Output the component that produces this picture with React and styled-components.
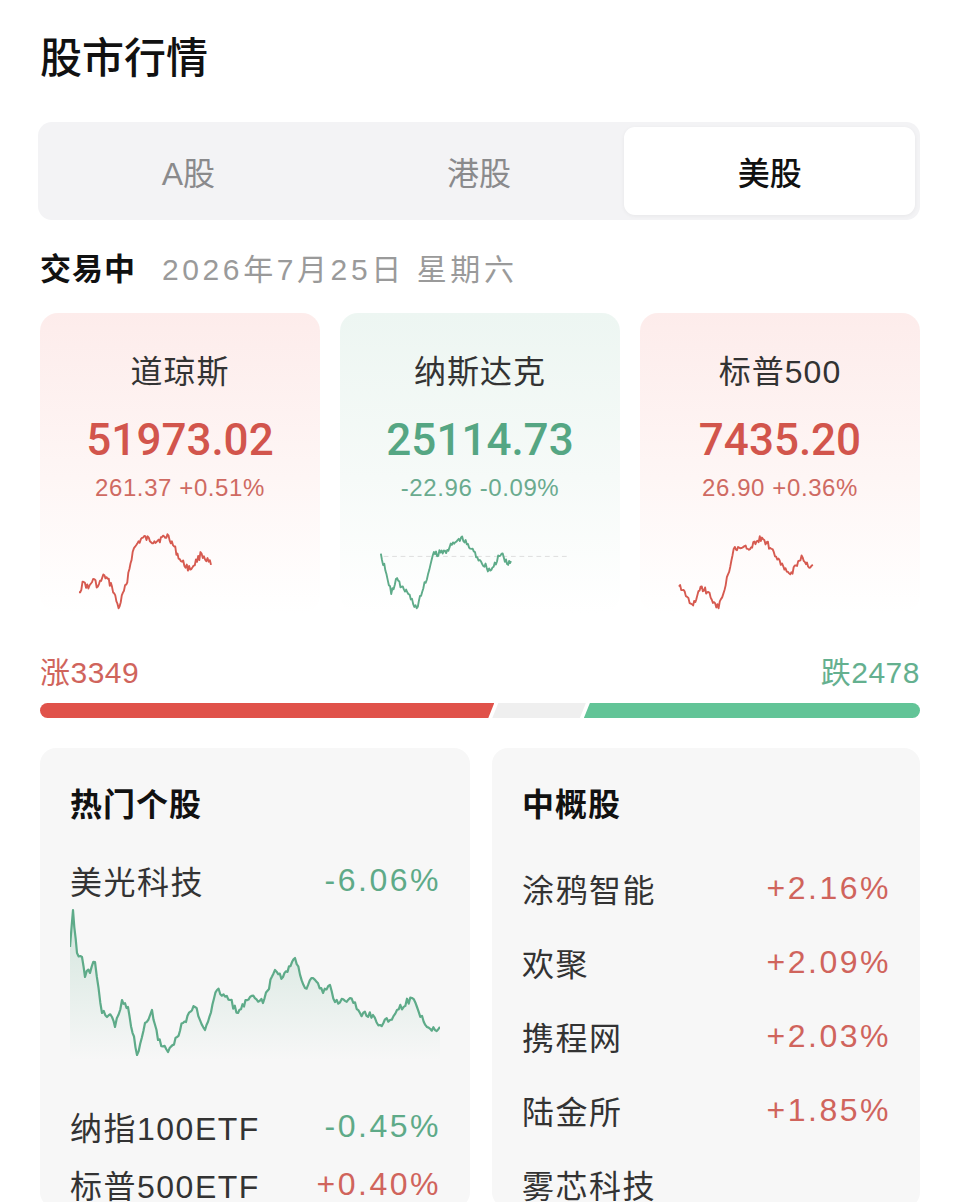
import styled, { createGlobalStyle } from "styled-components"

const RED = "#d2554c"
const GREEN = "#55a683"

const GlobalStyle = createGlobalStyle`
  body {
    margin: 0;
    background: #fff;
    font-family: "Liberation Sans", "Noto Sans CJK SC", sans-serif;
    color: #222;
  }
`

const Page = styled.div`
  width: 880px;
  padding: 31px 40px 0;
  height: 1171px;
  overflow: hidden;
`

const Title = styled.h1`
  margin: 0;
  font-size: 42px;
  line-height: 56px;
  font-weight: 500;
  color: #111;
`

const Segment = styled.div`
  margin-top: 35px;
  margin-left: -2px;
  height: 98px;
  box-sizing: border-box;
  padding: 5px;
  border-radius: 14px;
  background: #f3f3f5;
  display: grid;
  grid-template-columns: repeat(3, 1fr);
`

const Tab = styled.div`
  display: flex;
  align-items: center;
  justify-content: center;
  border-radius: 11px;
  font-size: 32px;
  font-weight: ${p => (p.$active ? 500 : 400)};
  color: ${p => (p.$active ? "#111" : "#8a8a8c")};
  background: ${p => (p.$active ? "#fff" : "transparent")};
  box-shadow: ${p => (p.$active ? "0 1px 4px rgba(0,0,0,0.05)" : "none")};
`

const Status = styled.div`
  margin-top: 30px;
  display: flex;
  align-items: center;
  gap: 26px;
  line-height: 40px;
`

const StatusLabel = styled.span`
  font-size: 31px;
  font-weight: 700;
  color: #111;
  letter-spacing: 1px;
`

const StatusDate = styled.span`
  font-size: 30px;
  color: #9a9a9a;
  letter-spacing: 3.6px;
`

const Cards = styled.div`
  margin-top: 23px;
  display: grid;
  grid-template-columns: repeat(3, 1fr);
  gap: 20px;
`

const Card = styled.div`
  height: 300px;
  border-radius: 18px;
  background: linear-gradient(
    180deg,
    ${p => (p.$up ? "#fdeceb" : "#edf6f2")} 0%,
    ${p => (p.$up ? "#fef6f5" : "#f6faf8")} 55%,
    #ffffff 100%
  );
  display: flex;
  flex-direction: column;
  align-items: center;
  padding-top: 39px;
  box-sizing: border-box;
`

const CardName = styled.div`
  font-size: 32px;
  line-height: 40px;
  color: #333;
  letter-spacing: 1px;
`

const CardValue = styled.div`
  margin-top: 22px;
  font-size: 44px;
  line-height: 52px;
  font-family: "Roboto", "Liberation Sans", sans-serif;
  font-weight: 500;
  color: ${p => (p.$up ? RED : GREEN)};
`

const CardChange = styled.div`
  margin-top: 7px;
  font-size: 24px;
  line-height: 30px;
  letter-spacing: 0.6px;
  color: ${p => (p.$up ? "#cf6a62" : "#6aab8f")};
`

const Spark = styled.svg`
  margin-top: 27px;
  align-self: flex-start;
  margin-left: 33px;
  display: block;
`

const BreadthRow = styled.div`
  margin-top: 42px;
  display: flex;
  justify-content: space-between;
  font-size: 30px;
  line-height: 36px;
  letter-spacing: 0.5px;
`

const BreadthText = styled.span`
  color: ${p => (p.$up ? "#d0645c" : "#64b08f")};
`

const Bar = styled.div`
  margin-top: 12px;
  height: 15px;
  display: flex;
  border-radius: 8px;
  overflow: hidden;
`

const BarPart = styled.div`
  flex: ${p => p.$grow} 1 0;
  background: ${p => p.$color};
  clip-path: ${p => p.$clip};
  margin: 0 ${p => (p.$inner ? -2 : 0)}px;
`

const Panels = styled.div`
  margin-top: 30px;
  display: grid;
  grid-template-columns: 430px 428px;
  gap: 22px;
`

const Panel = styled.div`
  background: #f7f7f7;
  border-radius: 16px;
  padding: 37px 31px 0 30px;
  height: 460px;
  box-sizing: border-box;
`

const PanelTitle = styled.div`
  font-size: 32px;
  line-height: 40px;
  font-weight: 700;
  color: #111;
  letter-spacing: 1px;
`

const Row = styled.div`
  display: flex;
  justify-content: space-between;
  align-items: center;
  height: ${p => p.$h}px;
  margin-top: ${p => p.$mt || 0}px;
`

const RowName = styled.span`
  font-size: 32px;
  color: #333;
  letter-spacing: 1.5px;
`

const RowPct = styled.span`
  font-size: 32px;
  letter-spacing: 2.5px;
  margin-right: -2px;
  color: ${p => (p.$up ? "#d0645c" : "#5eaa88")};
`

const BigChart = styled.svg`
  display: block;
  margin-top: 1px;
`

// tiny deterministic random walk between hand-placed key points
function walk(keys, seed, amp, step) {
  let s = seed
  const rand = () => {
    s = (s * 9301 + 49297) % 233280
    return s / 233280
  }
  const pts = []
  for (let i = 0; i < keys.length - 1; i++) {
    const [x0, y0] = keys[i]
    const [x1, y1] = keys[i + 1]
    const n = Math.max(1, Math.round((x1 - x0) / step))
    for (let j = 0; j < n; j++) {
      const t = j / n
      const jitter = j === 0 ? 0 : (rand() - 0.5) * amp * 2
      pts.push([x0 + (x1 - x0) * t, y0 + (y1 - y0) * t + jitter])
    }
  }
  pts.push(keys[keys.length - 1])
  return pts
}

const toPath = pts =>
  "M" + pts.map(([x, y]) => `${x.toFixed(1)},${y.toFixed(1)}`).join(" L")

const indices = [
  {
    name: "道琼斯",
    value: "51973.02",
    change: "261.37 +0.51%",
    up: true,
    seed: 17,
    keys: [[0, 66], [5, 55], [10, 62], [15, 52], [20, 60], [27, 48], [35, 60], [42, 83], [50, 58], [57, 23], [62, 14], [68, 8], [80, 12], [95, 6], [108, 33], [118, 42], [130, 25], [140, 37]],
  },
  {
    name: "纳斯达克",
    value: "25114.73",
    change: "-22.96 -0.09%",
    up: false,
    seed: 41,
    baseline: 28,
    keys: [[2, 25], [8, 47], [13, 68], [18, 52], [24, 60], [30, 66], [40, 83], [47, 62], [52, 47], [57, 27], [70, 22], [87, 8], [98, 20], [108, 33], [118, 43], [130, 25], [137, 37], [140, 33]],
  },
  {
    name: "标普500",
    value: "7435.20",
    change: "26.90 +0.36%",
    up: true,
    seed: 73,
    keys: [[0, 60], [6, 65], [10, 72], [15, 80], [23, 60], [30, 66], [42, 83], [52, 47], [58, 20], [73, 20], [88, 8], [98, 20], [108, 37], [118, 47], [130, 27], [138, 40], [142, 37]],
  },
]

const hotKeys = [
  [0, 42], [3, 5], [7, 48], [12, 52], [15, 72], [25, 57], [32, 108], [42, 112], [45, 122], [52, 95], [58, 102],
  [67, 150], [75, 118], [82, 105], [88, 135], [98, 147], [107, 132], [113, 118], [125, 102], [135, 125],
  [147, 85], [160, 95], [168, 108], [180, 92], [193, 98], [205, 65], [213, 72], [225, 53], [235, 83],
  [243, 73], [253, 88], [260, 80], [265, 97], [280, 93], [290, 108], [303, 110], [310, 120], [320, 115],
  [327, 105], [342, 93], [347, 102], [357, 122], [365, 125], [370, 122],
]

const hotStocks = [
  { name: "纳指100ETF", pct: "-0.45%", up: false },
  { name: "标普500ETF", pct: "+0.40%", up: true },
]

const chinaStocks = [
  { name: "涂鸦智能", pct: "+2.16%" },
  { name: "欢聚", pct: "+2.09%" },
  { name: "携程网", pct: "+2.03%" },
  { name: "陆金所", pct: "+1.85%" },
  { name: "雾芯科技", pct: "" },
]

function Sparkline({ item }) {
  const pts = walk(item.keys, item.seed, 3.5, 1.2)
  const color = item.up ? "#d65a50" : "#5eab89"
  return (
    <Spark width="210" height="88" viewBox="0 0 210 88">
      {item.baseline && (
        <line x1="5" x2="200" y1={item.baseline} y2={item.baseline} stroke="#dcdcdc" strokeWidth="1" strokeDasharray="5 4" />
      )}
      <path d={toPath(pts)} fill="none" stroke={color} strokeWidth="2" strokeLinejoin="round" />
    </Spark>
  )
}

function HotChart() {
  const pts = walk(hotKeys, 5, 3.5, 1.6)
  const line = toPath(pts)
  const area = line + ` L370,155 L0,155 Z`
  return (
    <BigChart width="370" height="160" viewBox="0 0 370 160">
      <defs>
        <linearGradient id="hotFill" x1="0" y1="0" x2="0" y2="1">
          <stop offset="0%" stopColor="#5eab89" stopOpacity="0.24" />
          <stop offset="100%" stopColor="#5eab89" stopOpacity="0" />
        </linearGradient>
      </defs>
      <path d={area} fill="url(#hotFill)" />
      <path d={line} fill="none" stroke="#5eab89" strokeWidth="2.2" strokeLinejoin="round" />
    </BigChart>
  )
}

export default function App() {
  return (
    <Page>
      <GlobalStyle />
      <Title>股市行情</Title>
      <Segment>
        <Tab>A股</Tab>
        <Tab>港股</Tab>
        <Tab $active>美股</Tab>
      </Segment>
      <Status>
        <StatusLabel>交易中</StatusLabel>
        <StatusDate>2026年7月25日 星期六</StatusDate>
      </Status>
      <Cards>
        {indices.map(item => (
          <Card key={item.name} $up={item.up}>
            <CardName>{item.name}</CardName>
            <CardValue $up={item.up}>{item.value}</CardValue>
            <CardChange $up={item.up}>{item.change}</CardChange>
            <Sparkline item={item} />
          </Card>
        ))}
      </Cards>
      <BreadthRow>
        <BreadthText $up>涨3349</BreadthText>
        <BreadthText>跌2478</BreadthText>
      </BreadthRow>
      <Bar>
        <BarPart $grow={3349} $color="#e0524a" $clip="polygon(0 0, 100% 0, calc(100% - 6px) 100%, 0 100%)" />
        <BarPart $inner $grow={690} $color="#efefef" $clip="polygon(6px 0, 100% 0, calc(100% - 6px) 100%, 0 100%)" />
        <BarPart $grow={2478} $color="#62c497" $clip="polygon(6px 0, 100% 0, 100% 100%, 0 100%)" />
      </Bar>
      <Panels>
        <Panel>
          <PanelTitle>热门个股</PanelTitle>
          <Row $h={48} $mt={31}>
            <RowName>美光科技</RowName>
            <RowPct>-6.06%</RowPct>
          </Row>
          <HotChart />
          {hotStocks.map((s, i) => (
            <Row key={s.name} $h={58} $mt={i === 0 ? 32 : 0}>
              <RowName>{s.name}</RowName>
              <RowPct $up={s.up}>{s.pct}</RowPct>
            </Row>
          ))}
        </Panel>
        <Panel>
          <PanelTitle>中概股</PanelTitle>
          {chinaStocks.map((s, i) => (
            <Row key={s.name} $h={74} $mt={i === 0 ? 26 : 0}>
              <RowName>{s.name}</RowName>
              <RowPct $up>{s.pct}</RowPct>
            </Row>
          ))}
        </Panel>
      </Panels>
    </Page>
  )
}
